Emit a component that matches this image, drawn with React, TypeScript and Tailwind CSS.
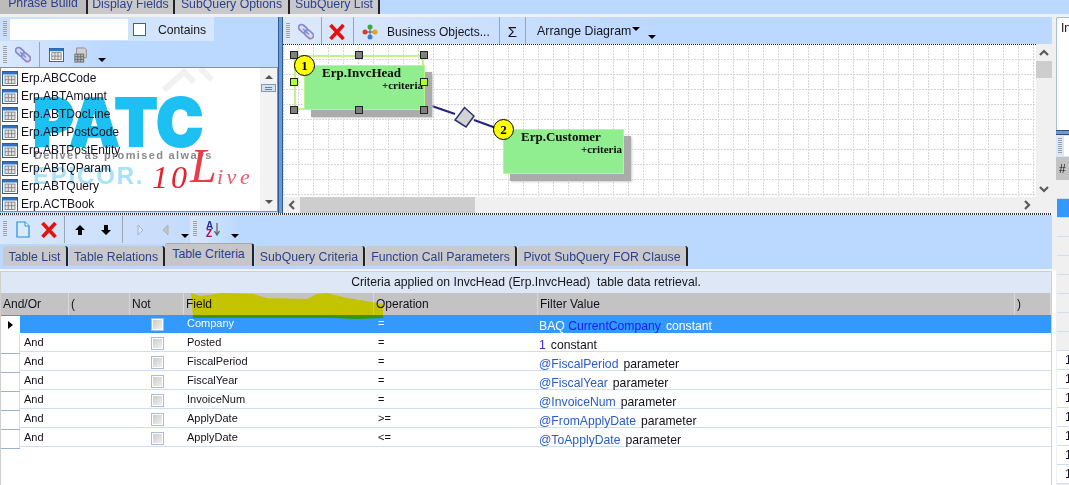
import React from "react";

const sans = "font-['Liberation_Sans',Arial,sans-serif]";

function Grip({ h = 16 }: { h?: number }) {
  return (
    <svg width="4" height={h} className="shrink-0">
      {Array.from({ length: Math.floor(h / 2) }).map((_, i) => (
        <rect key={i} x="0" y={i * 2} width="4" height="1" fill="#a0a0a0" />
      ))}
    </svg>
  );
}

function TableIcon({ size = 16 }: { size?: number }) {
  return (
    <svg width={size} height={size - 1} viewBox="0 0 16 15" className="shrink-0">
      <rect x="0.5" y="0.5" width="15" height="14" fill="#fff" stroke="#1f5fae" />
      <rect x="1" y="1" width="14" height="2.5" fill="#2f74c4" />
      <rect x="3" y="5" width="10" height="7.5" fill="#e4e4e4" stroke="#777" strokeWidth="0.8" />
      <path d="M6.3 5v7.5M9.6 5v7.5M3 8.7h10" stroke="#777" strokeWidth="0.8" />
    </svg>
  );
}

function LinkIcon() {
  return (
    <svg width="16" height="17" viewBox="0 0 16 17" className="shrink-0">
      <g transform="rotate(42 8 8.5)" fill="#cfd3f2" fillOpacity="0.55" stroke="#8488c8" strokeWidth="1.7">
        <rect x="-1" y="5.5" width="10" height="6" rx="3" />
        <rect x="7" y="5.5" width="10" height="6" rx="3" stroke="#9a82c4" />
      </g>
      <path d="M5 6 L11 11.5" stroke="#5f9be0" strokeWidth="1.2" />
    </svg>
  );
}

function RedX({ size = 16 }: { size?: number }) {
  return (
    <svg width={size} height={size} viewBox="0 0 16 16" className="shrink-0">
      <path d="M1.5 1 L14.5 15 M14.5 1 L1.5 15" stroke="#e6100c" strokeWidth="3.6" />
    </svg>
  );
}

function Caret() {
  return <div className="h-0 w-0 shrink-0 border-x-[4px] border-t-[4px] border-x-transparent border-t-black" />;
}

function Sep() {
  return <div className="h-[27px] w-px shrink-0 bg-[#9aa5b5]" />;
}

function Tab({ label, w, active }: { label: string; w: number; active?: boolean }) {
  return (
    <div
      style={{ width: w }}
      className={
        active
          ? "z-10 flex h-[23px] shrink-0 items-center justify-center self-end rounded-t-[3px] border-r-2 border-t border-[#222] border-t-[#a8a8a8] bg-[#c6c6c8] pb-[2px] text-[12.3px] text-[#2b3f8f]"
          : "flex h-[20px] shrink-0 items-center justify-center self-end rounded-t-[3px] border-r-2 border-[#222] bg-[#c9c9cb] pt-[2px] text-[12.3px] text-[#2b3f8f]"
      }
    >
      {label}
    </div>
  );
}

function TableList() {
  const items = ["Erp.ABCCode", "Erp.ABTAmount", "Erp.ABTDocLine", "Erp.ABTPostCode", "Erp.ABTPostEntity", "Erp.ABTQParam", "Erp.ABTQuery", "Erp.ACTBook"];
  return (
    <div className="relative flex h-[145px] overflow-hidden border border-[#8f8f8f] bg-white">
      <svg className="absolute left-[155px] top-0" width="70" height="24" viewBox="0 0 70 24">
        <path d="M8 22 L28 4 L38 14 M44 0 L56 12" fill="none" stroke="#f1f1f1" strokeWidth="6" />
      </svg>
      <div className="absolute left-[32px] top-[17px] h-[100px] w-[225px]">
        <span className="absolute left-0 top-[-3px] origin-top-left scale-x-[0.95] text-[66px] font-black leading-[80px] tracking-[1px] text-[#1cc0f2] [-webkit-text-stroke:2px_#1cc0f2] font-['Inter',sans-serif]">PATC</span>
        <span className="absolute left-px top-[64px] whitespace-nowrap text-[11px] font-bold leading-[13px] tracking-[1.35px] text-[#8a8a8a]">Deliver as promised always</span>
        <span className="absolute left-0 top-[78px] text-[24px] font-bold leading-[26px] tracking-[1.8px] text-[#a9e2f6]">EPICOR.</span>
        <span className="absolute left-[119px] top-[76px] whitespace-nowrap text-[32px] italic leading-[32px] tracking-[3px] text-[#e8202c] font-['Liberation_Serif',serif]">10</span>
        <span className="absolute left-[157px] top-[54px] whitespace-nowrap text-[48px] italic leading-[54px] text-[#ea3c48] font-['Liberation_Serif',serif]">L</span>
        <span className="absolute left-[184px] top-[80px] whitespace-nowrap text-[22px] italic leading-[24px] tracking-[3.5px] text-[#ea5a66] font-['Liberation_Serif',serif]">ive</span>
      </div>
      <div className="relative flex-1 pt-px">
        {items.map((t) => (
          <div key={t} className="flex h-[18px] items-center gap-[3px] pl-px text-[12px] text-[#15101c]">
            <TableIcon />
            <span>{t}</span>
          </div>
        ))}
      </div>
      <div className="relative flex w-[17px] shrink-0 flex-col items-center bg-[#f2f2f2] pt-[7px]">
        <div className="h-0 w-0 border-x-[4px] border-b-[4px] border-x-transparent border-b-[#555]" />
        <div className="mt-[5px] flex h-[8px] w-[15px] flex-col items-center justify-center gap-px border border-[#7f9db9] bg-[#d6dff0]">
          <div className="h-px w-[7px] bg-[#6a7f9a]" />
          <div className="h-px w-[7px] bg-[#6a7f9a]" />
        </div>
        <div className="flex-1" />
        <div className="mb-[7px] h-0 w-0 border-x-[4px] border-t-[4px] border-x-transparent border-t-[#555]" />
      </div>
    </div>
  );
}

function LeftPanel() {
  return (
    <div className="flex w-[278px] shrink-0 flex-col">
      <div className="flex h-[24px] items-center">
        <div className="flex h-[24px] w-[214px] items-center bg-gradient-to-r from-[#c9dffb] to-[#d6e6fc] pl-[3px]">
          <Grip h={16} />
          <div className="ml-[3px] h-[21px] w-[118px] bg-white" />
          <div className="ml-[5px] h-[13px] w-[13px] border border-[#3f5f9a] bg-white" />
          <span className="ml-[12px] pt-[2px] text-[12.2px] text-[#15151c]">Contains</span>
        </div>
      </div>
      <div className="flex h-[26px] items-center">
        <div className="flex h-[26px] w-[106px] items-center bg-gradient-to-r from-[#dce9fb] to-[#bcd8ff] pl-[3px] pt-px">
          <Grip h={18} />
          <div className="ml-[8px]"><LinkIcon /></div>
          <div className="ml-[8px] h-[26px] w-px bg-[#9aa5b5]" />
          <div className="ml-[9px]"><TableIcon size={15} /></div>
          <svg width="16" height="18" viewBox="0 0 16 18" className="ml-[10px]">
            <path d="M3 1h9l2 2v9H3z" fill="#d0d0d0" stroke="#888" />
            <rect x="1" y="8" width="10" height="9" fill="#bbb" stroke="#666" />
            <path d="M4.3 8v9M7.6 8v9M1 11h10M1 14h10" stroke="#666" />
          </svg>
          <div className="ml-[10px] mt-[11px]"><Caret /></div>
        </div>
      </div>
      <TableList />
    </div>
  );
}

function Handle({ x, y, on }: { x: number; y: number; on?: boolean }) {
  return (
    <div
      style={{ left: x - 4, top: y - 4 }}
      className={`absolute h-[8px] w-[8px] border border-[#222] ${on ? "bg-[#adff2f]" : "bg-[#808080]"}`}
    />
  );
}

function Node({ x, y, n, name }: { x: number; y: number; n: number; name: string }) {
  return (
    <>
      <div style={{ left: x + 7, top: y + 7 }} className="absolute h-[45px] w-[121px] bg-[#ababab] shadow-[1px_1px_2px_#ccc]" />
      <div style={{ left: x, top: y }} className="absolute h-[45px] w-[121px] border border-[#b8f58a] bg-[#90ee90] font-['Liberation_Serif',serif] font-bold text-[#0a0a0a]">
        <div className="ml-[17px] mt-[-1px] text-[13px] leading-[15px]">{name}</div>
        <div className="mr-px mt-[-1px] text-right text-[11px] leading-[13px]">+criteria</div>
      </div>
      <div style={{ left: x - 10, top: y - 10 }} className="absolute z-10 flex h-[21px] w-[21px] items-center justify-center rounded-full border border-black bg-[#ffff00] font-['Liberation_Serif',serif] text-[13px] font-bold text-black">
        {n}
      </div>
    </>
  );
}

function Diagram() {
  return (
    <div className="relative flex-1 overflow-hidden bg-white">
      <svg className="absolute inset-0 h-full w-full">
        <defs>
          <pattern id="dots" width="15" height="15" patternUnits="userSpaceOnUse">
            <path d="M0 0.5H15 M0.5 0V15" stroke="#d6d6d6" strokeDasharray="2 1" fill="none" />
          </pattern>
        </defs>
        <rect width="100%" height="100%" fill="url(#dots)" />
        <path d="M143 60 L172 70 M191 76 L213 84" stroke="#23237e" strokeWidth="2" fill="none" />
      </svg>
      <div className="absolute inset-x-0 top-0 h-px bg-[repeating-linear-gradient(90deg,#222_0_1px,#fff_1px_2px)]" />
      <svg className="absolute left-[170px] top-[62px]" width="23" height="23" viewBox="0 0 23 23">
        <path d="M11.5 1.5 L21 10 L13 21 L2 14 Z" fill="#d3d3d3" stroke="#30306e" strokeWidth="1.5" />
      </svg>
      <div className="absolute left-[11px] top-[11px] h-[55px] w-[130px] border-2 border-[#c3f28a]" />
      <Node x={21} y={21} n={1} name="Erp.InvcHead" />
      <Node x={220} y={85} n={2} name="Erp.Customer" />
      <Handle x={11} y={11} />
      <Handle x={76} y={11} />
      <Handle x={141} y={11} />
      <Handle x={11} y={38} on />
      <Handle x={141} y={38} on />
      <Handle x={11} y={66} />
      <Handle x={76} y={66} />
      <Handle x={141} y={66} />
    </div>
  );
}

function Chevron({ d }: { d: "u" | "d" | "l" | "r" }) {
  const p = { u: "M1 7 L5 3 L9 7", d: "M1 3 L5 7 L9 3", l: "M7 1 L3 5 L7 9", r: "M3 1 L7 5 L3 9" }[d];
  return (
    <svg width="10" height="10" viewBox="0 0 10 10" className="shrink-0">
      <path d={p} fill="none" stroke="#5a5a5a" strokeWidth="2.2" />
    </svg>
  );
}

function RightDiagramPanel() {
  return (
    <div className="flex min-w-0 flex-1 flex-col">
      <div className="flex h-[27px] items-center bg-[#bbd8ff]">
        <div className="flex h-[27px] w-[373px] items-center bg-gradient-to-r from-[#dce9fb] to-[#bcd8ff] pl-[3px] pt-[2px]">
          <Grip h={17} />
          <div className="ml-[8px]"><LinkIcon /></div>
          <div className="ml-[7px] mt-[-2px]"><Sep /></div>
          <div className="ml-[7px]"><RedX /></div>
          <div className="ml-[8px] mt-[-2px]"><Sep /></div>
          <svg width="16" height="16" viewBox="0 0 16 16" className="ml-[8px] shrink-0">
            <path d="M3 8H13M8 3V13" stroke="#555" strokeWidth="1" />
            <circle cx="8" cy="3" r="2.5" fill="#3fa83a" />
            <circle cx="3" cy="8" r="2.5" fill="#d93a2b" />
            <circle cx="13" cy="8" r="2.5" fill="#e8a020" />
            <circle cx="8" cy="13" r="2.5" fill="#3a7fd0" />
          </svg>
          <span className="ml-[9px] whitespace-nowrap text-[12px] text-[#15151c]">Business Objects...</span>
          <div className="ml-[9px] mt-[-2px]"><Sep /></div>
          <span className="ml-[8px] w-[11px] text-[15px] leading-none text-[#15151c]">Σ</span>
          <div className="ml-[8px] mt-[-2px]"><Sep /></div>
          <span className="ml-[11px] whitespace-nowrap text-[12.4px] text-[#15151c]">Arrange Diagram</span>
          <div className="mb-[5px] ml-px"><Caret /></div>
          <div className="ml-[8px] mt-[11px]"><Caret /></div>
        </div>
      </div>
      <div className="flex min-h-0 flex-1">
        <Diagram />
        <div className="flex w-[16px] shrink-0 flex-col items-center bg-[#f0f0f0] pt-[4px]">
          <Chevron d="u" />
          <div className="mt-[3px] h-[17px] w-full bg-[#cdcdcd]" />
          <div className="flex-1" />
          <div className="mb-[3px]"><Chevron d="d" /></div>
        </div>
      </div>
      <div className="flex h-[16px] items-center bg-[#f0f0f0] pl-[4px]">
        <Chevron d="l" />
        <div className="ml-[3px] h-full w-[175px] bg-[#cdcdcd]" />
        <div className="flex-1" />
        <div className="mr-[20px]"><Chevron d="r" /></div>
      </div>
    </div>
  );
}

function BottomToolbar() {
  return (
    <div className="flex h-[29px] items-center">
      <div className="flex h-[28px] w-[190px] items-center bg-gradient-to-r from-[#d8e7fb] to-[#c6dcfc] pl-[3px]">
        <Grip h={17} />
        <svg width="14" height="17" viewBox="0 0 14 17" className="ml-[9px] shrink-0">
          <path d="M1 1H9L13 5V16H1Z" fill="#d8ecfb" stroke="#2a8ee0" strokeWidth="1.2" />
          <path d="M9 1V5H13" fill="#fff" stroke="#2a8ee0" />
        </svg>
        <div className="ml-[11px]"><RedX /></div>
        <div className="ml-[7px]"><Sep /></div>
        <svg width="10" height="10" viewBox="0 0 10 10" className="ml-[10px] shrink-0"><path d="M5 0L10 5H7V10H3V5H0Z" fill="#000" /></svg>
        <svg width="10" height="10" viewBox="0 0 10 10" className="ml-[16px] shrink-0"><path d="M5 10L10 5H7V0H3V5H0Z" fill="#000" /></svg>
        <div className="ml-[11px]"><Sep /></div>
        <svg width="7" height="12" viewBox="0 0 7 12" className="ml-[14px] shrink-0"><path d="M1 1L6 6L1 11Z" fill="#dbe7f6" stroke="#9fb4ce" /></svg>
        <svg width="7" height="12" viewBox="0 0 7 12" className="ml-[18px] shrink-0"><path d="M6 1L1 6L6 11Z" fill="#c4c4c4" stroke="#b0b0b0" /></svg>
        <div className="ml-[12px] mt-[12px]"><Caret /></div>
      </div>
      <div className="flex h-[28px] w-[50px] items-center bg-gradient-to-r from-[#d8e7fb] to-[#bcd8ff] pl-[3px]">
        <Grip h={17} />
        <div className="ml-[9px] flex flex-col text-[10px] font-bold leading-[8px]">
          <span className="text-[#1d2fb0]">A</span>
          <span className="text-[#a01050]">Z</span>
        </div>
        <svg width="6" height="13" viewBox="0 0 6 13" className="ml-px shrink-0"><path d="M3 0V11M0.5 8L3 12L5.5 8" fill="none" stroke="#666" strokeWidth="1.3" /></svg>
        <div className="ml-[11px] mt-[12px]"><Caret /></div>
      </div>
    </div>
  );
}

type Row = { andor: string; field: string; op: string; val: [string, string, string] };

const rows: Row[] = [
  { andor: "", field: "Company", op: "=", val: ["BAQ ", "CurrentCompany", "constant"] },
  { andor: "And", field: "Posted", op: "=", val: ["", "1", "constant"] },
  { andor: "And", field: "FiscalPeriod", op: "=", val: ["", "@FiscalPeriod", "parameter"] },
  { andor: "And", field: "FiscalYear", op: "=", val: ["", "@FiscalYear", "parameter"] },
  { andor: "And", field: "InvoiceNum", op: "=", val: ["", "@InvoiceNum", "parameter"] },
  { andor: "And", field: "ApplyDate", op: ">=", val: ["", "@FromApplyDate", "parameter"] },
  { andor: "And", field: "ApplyDate", op: "<=", val: ["", "@ToApplyDate", "parameter"] },
];

const colClass = "grid-cols-[68px_61px_54px_190px_164px_477px_36px]";

function CriteriaGrid() {
  return (
    <div className="relative flex-1 overflow-hidden border border-b-0 border-[#cfcfcf] bg-white">
      <div className="flex h-[21px] items-center justify-center bg-[#dee7f5] text-[12.2px] text-[#15151c]">
        Criteria applied on InvcHead (Erp.InvcHead)&nbsp; table data retrieval.
      </div>
      <div className={`grid h-[22px] ${colClass} bg-[#c3c3c3] text-[12px] text-[#15101c]`}>
        {["And/Or", "(", "Not", "Field", "Operation", "Filter Value", ")"].map((h) => (
          <div key={h} className="flex items-center border-r border-[#d8d8d8] pl-[2px]">{h}</div>
        ))}
      </div>
      {rows.map((r, i) => {
        const sel = i === 0;
        const pad = sel ? "pb-[3px]" : "pb-[2px]";
        return (
          <div key={i} className={`grid ${colClass} text-[11px] ${sel ? "h-[18px] bg-[#3399ff] text-white" : "h-[19px] border-b border-[#cddff2] text-[#15101c]"}`}>
            <div className="flex items-center">
              <div className={`flex h-[18px] w-[19px] shrink-0 items-center justify-center bg-white ${sel ? "" : "border-r border-[#cddff2] shadow-[0_1px_0_#9db2cf]"}`}>
                {sel ? <div className="h-0 w-0 border-y-[4px] border-l-[5px] border-y-transparent border-l-black" /> : null}
              </div>
              <span className={`pl-[4px] ${pad}`}>{r.andor}</span>
            </div>
            <div />
            <div className={`flex items-center pl-[21px] ${sel ? "pb-[2px]" : "pb-px"}`}>
              <div className="h-[13px] w-[13px] border border-[#a9bcd8] bg-gradient-to-br from-[#c8c8c8] to-[#f4f4f4] shadow-[inset_0_0_0_1px_#fff]" />
            </div>
            <div className={`flex items-center pl-[3px] ${pad}`}>{r.field}</div>
            <div className={`flex items-center pl-[4px] ${pad}`}>{r.op}</div>
            <div className={`flex items-center whitespace-pre pl-px text-[12.2px] ${sel ? "pt-[2px]" : "pt-[3px]"}`}>
              <span>{r.val[0]}</span>
              <span className={sel ? "text-[#1a1aff]" : r.val[1] === "1" ? "text-[#4a22d8]" : "text-[#2a5bc8]"}>{r.val[1]}</span>
              <span className="ml-[5px]">{r.val[2]}</span>
            </div>
            <div />
          </div>
        );
      })}
      <svg className="absolute left-[190px] top-[20px] mix-blend-multiply" width="194" height="28" viewBox="191 291 194 28">
        <path d="M191 292 L200 295 L223 292 L253 293 L267 297 L307 298 L317 293 L327 292 L347 297 L372 301 L383 303 L383 317 L357 318 L333 317 L267 317 L220 317 L193 317Z" fill="#ffff00" />
      </svg>
    </div>
  );
}

function FarRight() {
  return (
    <div className="flex w-[13px] shrink-0 flex-col overflow-hidden bg-[#f0f0f0]">
      <div className="h-[14px] shrink-0 bg-[#bbd8ff]" />
      <div className="h-[3px] shrink-0 bg-[#f0f0f0]" />
      <div className="h-[113px] shrink-0 rounded-tl-[2px] border-l border-t border-[#a8bfdc] bg-white pl-[4px] pt-[2px] text-[12px] leading-[16px] text-[#101018]">In</div>
      <div className="h-[5px] shrink-0 border-y border-[#2d4f80] bg-[#6f9ad0]" />
      <div className="flex h-[22px] shrink-0 items-center bg-[#d8e7fb] pl-[2px]">
        <Grip h={16} />
        <div className="ml-[2px] h-[20px] flex-1 bg-white" />
      </div>
      <div className="flex h-[23px] shrink-0 items-center bg-[#c3c3c3] pl-[3px] text-[12px] text-[#15101c]">#</div>
      {Array.from({ length: 16 }).map((_, i) => (
        <div key={i} className={`ml-px h-[19px] shrink-0 border-b border-[#cddff2] pl-[8px] text-[12px] leading-[18px] text-[#15101c] ${i === 1 ? "bg-[#3399ff]" : i > 8 ? "bg-white" : "bg-[#f0f0f0]"}`}>
          {i > 8 ? "1" : ""}
        </div>
      ))}
    </div>
  );
}

export default function App() {
  const topTabs: { l: string; w: number; a: boolean }[] = [
    { l: "Phrase Build", w: 88, a: true },
    { l: "Display Fields", w: 87, a: false },
    { l: "SubQuery Options", w: 115, a: false },
    { l: "SubQuery List", w: 90, a: false },
  ];
  return (
    <div className={`flex h-[485px] w-[1069px] overflow-hidden bg-[#f0f0f0] ${sans}`}>
      <div className="flex w-[1056px] shrink-0 flex-col">
        <div className="flex h-[14px] shrink-0 items-start overflow-hidden bg-[#bbd8ff]">
          {topTabs.map((t) => (
            <div key={t.l} style={{ width: t.w }} className={`flex shrink-0 items-center justify-center border-r-2 border-[#222] text-[12.3px] text-[#2b3f8f] ${t.a ? "mt-[-7px] h-[21px] bg-[#bcbcbc]" : "mt-[-5px] h-[19px] bg-[#c9c9cb]"}`}>
              {t.l}
            </div>
          ))}
        </div>
        <div className="h-[3px] shrink-0 bg-[#f0f0f0]" />
        <div className="mr-[4px] flex h-[196px] shrink-0 bg-[#bbd8ff]">
          <LeftPanel />
          <div className="w-[5px] shrink-0 border-x border-[#2d5a9c] bg-[#6f9ad0]" />
          <RightDiagramPanel />
        </div>
        <div className="mr-[4px] h-[2px] shrink-0 bg-[repeating-linear-gradient(90deg,#333_0_1px,#fff_1px_2px)]" />
        <div className="mr-[4px] flex h-[54px] shrink-0 flex-col bg-[#bbd8ff]">
          <BottomToolbar />
          <div className="flex h-[25px] items-end pb-[3px] pl-[3px]">
            <Tab label="Table List" w={65} />
            <div className="w-px" />
            <Tab label="Table Relations" w={96} />
            <Tab label="Table Criteria" w={89} active />
            <div className="w-px" />
            <Tab label="SubQuery Criteria" w={110} />
            <div className="w-px" />
            <Tab label="Function Call Parameters" w={151} />
            <div className="w-px" />
            <Tab label="Pivot SubQuery FOR Clause" w={170} />
          </div>
        </div>
        <div className="flex min-h-0 flex-1 flex-col border-t-2 border-[#f4f4f4] bg-white pr-[4px]">
          <CriteriaGrid />
        </div>
      </div>
      <FarRight />
    </div>
  );
}
